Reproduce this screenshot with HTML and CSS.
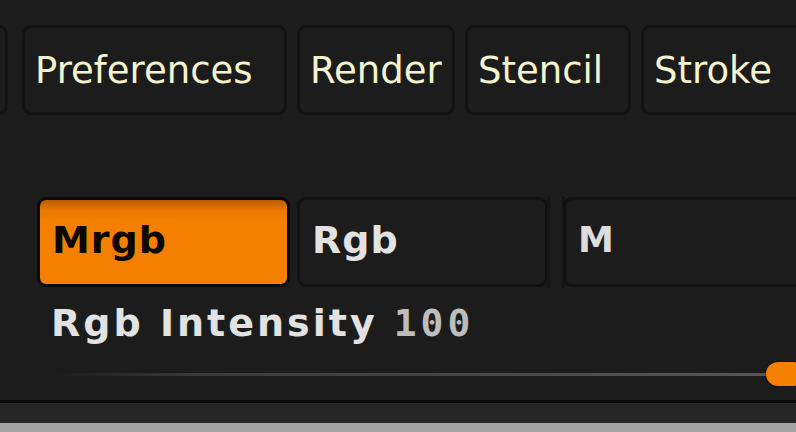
FILE: index.html
```html
<!DOCTYPE html>
<html>
	<head>
		<meta charset="UTF-8">
		<title>Color</title>
		<link rel="stylesheet" href="styles.css">
	</head>
	<body>
		<div class="panel">
			<div class="tabs">
				<div class="tab tab-cut"></div>
				<div class="tab tab-pref">Preferences</div>
				<div class="tab tab-render">Render</div>
				<div class="tab tab-stencil">Stencil</div>
				<div class="tab tab-stroke">Stroke</div>
			</div>
			<div class="modes">
				<div class="mode mode-on">Mrgb</div>
				<div class="mode mode-rgb">Rgb</div>
				<div class="split"></div>
				<div class="mode mode-m">M</div>
			</div>
			<div class="label">
				<span class="name">Rgb Intensity</span>
				<span class="value">100</span>
			</div>
			<div class="slider">
				<div class="track"></div>
				<div class="knob"></div>
			</div>
		</div>
		<div class="status"></div>
		<div class="bottom"></div>
	</body>
</html>
```

FILE: styles.css
```css
*{
	margin: 0;
	padding: 0;
	box-sizing: border-box;
}
body{
	width: 796px;
	height: 432px;
	overflow: hidden;
	background: #1c1c1c;
	font-family: "DejaVu Sans", sans-serif;
}
.panel{
	height: 403px;
	background: #1c1c1c;
	border-bottom: 3px solid #0b0b0b;
	overflow: hidden;
}
.tabs{
	display: flex;
	margin-top: 25px;
	margin-left: -92px;
	height: 90px;
}
.tab{
	flex: none;
	height: 90px;
	border: 3px solid #121212;
	border-radius: 9px;
	background: #1c1c1c;
	color: #f4f4cf;
	font-size: 37px;
	line-height: 1;
	display: flex;
	align-items: center;
	padding-left: 10px;
	margin-right: 10px;
}
.tab-cut{
	width: 100px;
	margin-right: 14px;
}
.tab-pref{
	width: 265px;
}
.tab-render{
	width: 158px;
}
.tab-stencil{
	width: 166px;
}
.tab-stroke{
	width: 230px;
}
.modes{
	display: flex;
	align-items: center;
	margin-top: 82px;
	padding-left: 37px;
	height: 90px;
}
.mode{
	flex: none;
	height: 90px;
	border: 3px solid #111;
	border-radius: 9px;
	background: #1c1c1c;
	color: #e2e2e2;
	font-size: 38px;
	font-weight: bold;
	letter-spacing: 1px;
	line-height: 1;
	display: flex;
	align-items: center;
	padding-left: 12px;
	padding-bottom: 4px;
}
.mode-on{
	width: 253px;
	border-color: #0a0a0a;
	background: linear-gradient(#b85c00 0, #e87800 12%, #f57f00 24%, #f57f00 100%);
	color: #0c0600;
	margin-right: 7px;
}
.mode-rgb{
	width: 251px;
}
.split{
	flex: none;
	width: 18px;
	height: 92px;
	border-left: 3px solid #151515;
	border-right: 3px solid #151515;
	margin: 0 -2px 0 -1px;
}
.mode-m{
	width: 250px;
	color: #dcdcdc;
	font-size: 36px;
}
.label{
	display: flex;
	align-items: baseline;
	margin-top: 16px;
	padding-left: 51px;
	height: 40px;
	line-height: 40px;
}
.name{
	color: #e2e2e2;
	font-size: 38px;
	font-weight: bold;
	letter-spacing: 3px;
}
.value{
	margin-left: 16px;
	color: #bdbdbd;
	font-family: "DejaVu Sans Mono", monospace;
	font-size: 38px;
	font-weight: bold;
	letter-spacing: 4px;
}
.slider{
	display: flex;
	align-items: center;
	margin-top: 19px;
	padding-left: 55px;
	height: 24px;
}
.track{
	flex: 1;
	height: 3px;
	background: linear-gradient(to right, #1c1c1c 0, #3a3a3a 20%, #484848 60%, #565656 100%);
}
.knob{
	flex: none;
	width: 40px;
	height: 24px;
	margin-right: -10px;
	border-radius: 12px;
	background: #f57f00;
	box-shadow: 0 0 2px #000;
}
.status{
	height: 20px;
	background: #262626;
}
.bottom{
	height: 9px;
	background: #a3a3a3;
}
```
